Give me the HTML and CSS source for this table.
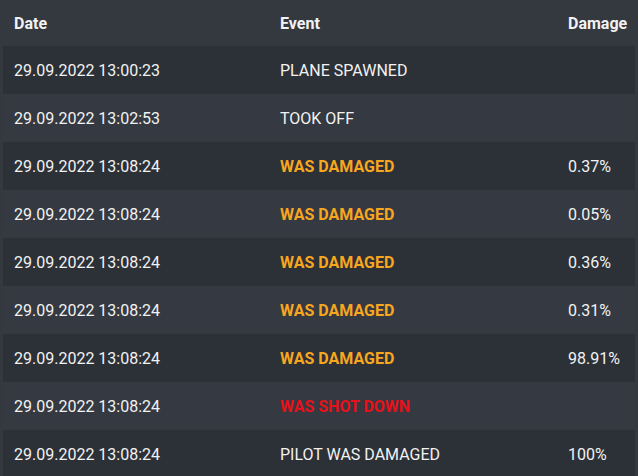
FILE: index.html
```html
<!DOCTYPE html>
<html>
<head>
<meta charset="utf-8">
<link rel="stylesheet" href="styles.css">
</head>
<body>
<div class="log">
  <div class="row head">
    <div class="cell">Date</div>
    <div class="cell">Event</div>
    <div class="cell">Damage</div>
  </div>
  <div class="row odd">
    <div class="cell">29.09.2022 13:00:23</div>
    <div class="cell">PLANE SPAWNED</div>
    <div class="cell"></div>
  </div>
  <div class="row even">
    <div class="cell">29.09.2022 13:02:53</div>
    <div class="cell">TOOK OFF</div>
    <div class="cell"></div>
  </div>
  <div class="row odd">
    <div class="cell">29.09.2022 13:08:24</div>
    <div class="cell warn">WAS DAMAGED</div>
    <div class="cell">0.37%</div>
  </div>
  <div class="row even">
    <div class="cell">29.09.2022 13:08:24</div>
    <div class="cell warn">WAS DAMAGED</div>
    <div class="cell">0.05%</div>
  </div>
  <div class="row odd">
    <div class="cell">29.09.2022 13:08:24</div>
    <div class="cell warn">WAS DAMAGED</div>
    <div class="cell">0.36%</div>
  </div>
  <div class="row even">
    <div class="cell">29.09.2022 13:08:24</div>
    <div class="cell warn">WAS DAMAGED</div>
    <div class="cell">0.31%</div>
  </div>
  <div class="row odd">
    <div class="cell">29.09.2022 13:08:24</div>
    <div class="cell warn">WAS DAMAGED</div>
    <div class="cell">98.91%</div>
  </div>
  <div class="row even">
    <div class="cell">29.09.2022 13:08:24</div>
    <div class="cell danger">WAS SHOT DOWN</div>
    <div class="cell"></div>
  </div>
  <div class="row odd">
    <div class="cell">29.09.2022 13:08:24</div>
    <div class="cell">PILOT WAS DAMAGED</div>
    <div class="cell">100%</div>
  </div>
</div>
</body>
</html>
```
FILE: styles.css
```css
html, body {
  margin: 0;
  padding: 0;
  background: #34383f;
}
body {
  font-family: Roboto, "Liberation Sans", sans-serif;
  font-size: 16px;
  color: #f2f2f2;
  overflow: hidden;
}
.log {
  display: flex;
  flex-direction: column;
  padding: 0 3px;
}
.row {
  display: grid;
  grid-template-columns: 266px 288px 1fr;
  height: 48px;
  align-items: center;
}
.head {
  height: 46px;
  font-weight: 700;
  background: #34383f;
}
.odd {
  background: #2c3037;
}
.even {
  background: #353941;
}
.cell {
  padding-left: 11px;
  white-space: nowrap;
}
.warn {
  color: #f9a61f;
  font-weight: 700;
}
.danger {
  color: #e8101a;
  font-weight: 700;
}
```
